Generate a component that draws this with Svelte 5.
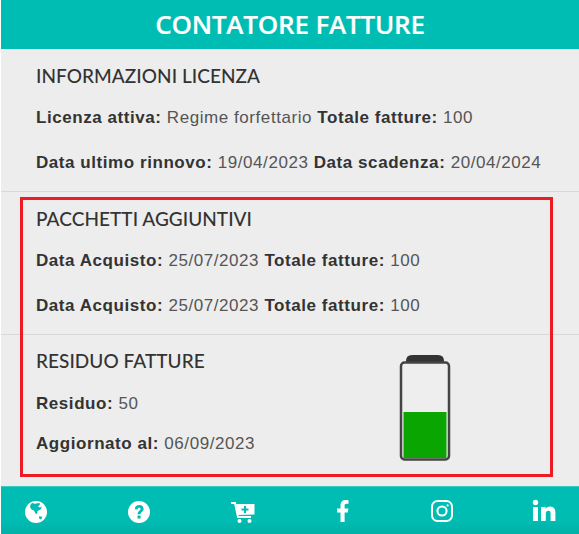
<script>
  const footer = ['globe', 'help', 'cart', 'fb', 'ig', 'li'];
</script>

<div class="page">
  <header class="top">CONTATORE FATTURE</header>
  <main class="content">
    <section class="sec first">
      <h2>INFORMAZIONI LICENZA</h2>
      <p class="row r1"><b>Licenza attiva:</b> Regime forfettario <b>Totale fatture:</b> 100</p>
      <p class="row r2"><b>Data ultimo rinnovo:</b> 19/04/2023 <b>Data scadenza:</b> 20/04/2024</p>
    </section>
    <div class="frame">
      <section class="sec second">
        <h2>PACCHETTI AGGIUNTIVI</h2>
        <p class="row r1b"><b>Data Acquisto:</b> 25/07/2023 <b>Totale fatture:</b> 100</p>
        <p class="row r2"><b>Data Acquisto:</b> 25/07/2023 <b>Totale fatture:</b> 100</p>
      </section>
      <section class="sec third">
        <div class="info">
          <h2>RESIDUO FATTURE</h2>
          <p class="row r1c"><b>Residuo:</b> 50</p>
          <p class="row r3"><b>Aggiornato al:</b> 06/09/2023</p>
        </div>
        <svg class="battery" width="52" height="110" viewBox="0 0 52 110" aria-hidden="true">
          <path d="M7 8 Q7 2 13 2 H39 Q45 2 45 8 V10 H7 Z" fill="#333" />
          <rect x="2" y="9.5" width="48" height="97" rx="3.5" fill="#eee" stroke="#444" stroke-width="2.5" />
          <rect x="4.5" y="59" width="43" height="46" fill="#0aa500" />
        </svg>
      </section>
    </div>
  </main>
  <footer class="bottom">
    {#each footer as f}
      <span class="ico">
        {#if f === 'globe'}
          <svg width="24" height="25" viewBox="0 0 24 25"><g transform="translate(0 1)"><circle cx="12" cy="12" r="11" fill="#fff"/><path d="M8 3 L11 3.8 L14.5 3 Q17 3.2 15.5 5 L14 6.5 L16 7.5 L17.5 6.5 Q18 9 15.5 10 L13.5 11 L13 14 L11.5 13.5 L10 10.5 L7.5 9.5 L6 7 Q6 4.5 8 3 Z" fill="#00bdb3"/><path d="M15 16.2 L18.4 16.8 Q18.2 18.4 16.6 19.4 L15.2 18.6 Z" fill="#00bdb3"/></g></svg>
        {:else if f === 'help'}
          <svg width="24" height="25" viewBox="0 0 24 25"><g transform="translate(0 1)"><circle cx="12" cy="12" r="11" fill="#fff"/><path d="M7.8 9.2 C8 6.4 9.8 5 12.2 5 C14.8 5 16.6 6.6 16.6 8.8 C16.6 11.8 13.6 11.8 13.6 14.2 H10.6 C10.6 10.8 13.6 10.6 13.6 9 C13.6 8.2 13 7.7 12.1 7.7 C11.2 7.7 10.7 8.3 10.5 9.6 Z" fill="#00bdb3"/><rect x="10.5" y="15.4" width="3.1" height="3" rx=".5" fill="#00bdb3"/></g></svg>
        {:else if f === 'cart'}
          <svg width="26" height="25" viewBox="0 0 26 25"><path d="M1 4 H5 L8 18 H21" fill="none" stroke="#fff" stroke-width="2"/><path d="M6 5 H24.5 V15.5 L8 16 Z" fill="#fff"/><path d="M15 7 V14 M11.5 10.5 H18.5" stroke="#00bdb3" stroke-width="2"/><circle cx="9.5" cy="22" r="2" fill="#fff"/><circle cx="19.5" cy="22" r="2" fill="#fff"/></svg>
        {:else if f === 'fb'}
          <svg width="24" height="24" viewBox="0 0 24 24"><path d="M9.5 23 V13.5 H6 V9.5 H9.5 V6.5 C9.5 3 11.5 1 14.6 1 C15.8 1 17 1.1 17.5 1.2 V4.8 H15.4 C13.9 4.8 13.6 5.6 13.6 6.7 V9.5 H17.4 L16.8 13.5 H13.6 V23 Z" fill="#fff"/></svg>
        {:else if f === 'ig'}
          <svg width="24" height="24" viewBox="0 0 24 24" fill="none" stroke="#fff" stroke-width="2"><rect x="2" y="2" width="20" height="20" rx="5.5"/><circle cx="12" cy="12" r="4.6"/><circle cx="17.6" cy="6.4" r="1.1" fill="#fff" stroke="none"/></svg>
        {:else}
          <svg width="24" height="24" viewBox="0 0 24 24" fill="#fff"><circle cx="3.5" cy="3.5" r="2.7"/><rect x="1" y="8" width="5" height="14"/><path d="M9 8 H13.6 V10 C14.4 8.6 16 7.6 18 7.6 C22 7.6 23.4 10 23.4 14 V22 H18.6 V14.8 C18.6 13 18.2 11.8 16.4 11.8 C14.6 11.8 13.8 13 13.8 14.8 V22 H9 Z"/></svg>
        {/if}
      </span>
    {/each}
  </footer>
</div>

<style>
  :global(body) { margin: 0; background: #fff; }
  .page {
    width: 578px;
    height: 534px;
    margin-left: 1px;
    display: flex;
    flex-direction: column;
    background: #ededed;
    font-family: "Liberation Sans", Arial, sans-serif;
    color: #333;
    overflow: hidden;
    isolation: isolate;
  }
  .top {
    height: 49px;
    flex: none;
    background: #00bdb3;
    color: #fff;
    text-align: center;
    font: 600 26px/48px "Open Sans", sans-serif;
    letter-spacing: -0.2px;
    -webkit-text-stroke: 0.2px #fff;
  }
  .content { flex: 1; min-height: 0; }
  .bottom {
    height: 48px;
    flex: none;
    background: linear-gradient(#00bdb3 70%, #02b0a6);
    border-top: 1px solid #3cc9c2;
    display: grid;
    grid-template-columns: 103px 103px 101px 99px 102px 24px;
    align-items: center;
    padding-left: 23px;
    box-sizing: border-box;
  }
  .ico { display: flex; height: 24px; }
  .ico svg { display: block; }
  h2 {
    margin: 0;
    font: 500 19px/22px Lato, sans-serif;
    letter-spacing: 0.05px;
    color: #333;
  }
  .row {
    margin: 0;
    font-size: 17px;
    line-height: 20px;
    letter-spacing: 0.56px;
    color: #555;
    white-space: nowrap;
  }
  .row b { color: #333; }
  .sec { padding-left: 35px; }
  .first { height: 143px; padding-top: 16px; box-sizing: border-box; border-bottom: 1px solid #d8d8d8; }
  .r1 { margin-top: 21px; }
  .r2 { margin-top: 25px; }
  .r1b { margin-top: 21px; }
  .r1c { margin-top: 22px; }
  .r3 { margin-top: 20px; }
  .frame {
    margin: 5px 26px 0 19px;
    height: 280px;
    box-sizing: border-box;
    border: 3px solid #ed1c24;
    position: relative;
  }
  .frame .sec { padding-left: 13px; }
  .frame::before {
    content: "";
    position: absolute;
    left: -22px;
    right: -29px;
    top: 134px;
    border-top: 1px solid #d8d8d8;
    z-index: -1;
  }
  .second { height: 134px; padding-top: 8px; box-sizing: border-box; }
  .third {
    padding-top: 16px;
    display: flex;
    justify-content: space-between;
  }
  .battery { margin: 3px 99px 0 0; }
</style>
